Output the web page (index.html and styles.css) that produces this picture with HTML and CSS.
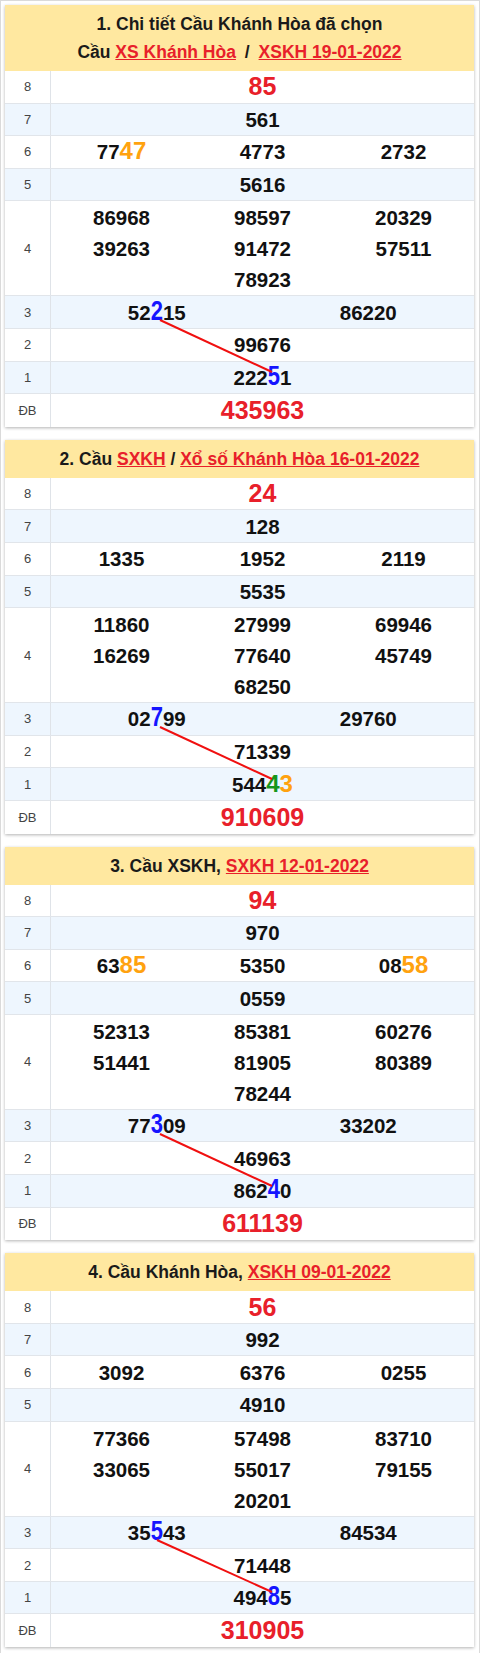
FILE: index.html
```html
<!DOCTYPE html>
<html lang="vi">
<head>
<meta charset="utf-8">
<title>Cầu Khánh Hòa</title>
<link rel="stylesheet" href="styles.css">
</head>
<body>
<div class="page">

  <section class="card">
    <div class="card-head">
      <div>1. Chi tiết Cầu Khánh Hòa đã chọn</div>
      <div>Cầu <a href="#">XS Khánh Hòa</a> <span class="sep">/</span> <a href="#">XSKH 19-01-2022</a></div>
    </div>
    <div class="card-body">
      <div class="row"><div class="lbl">8</div><div class="val"><span class="big">85</span></div></div>
      <div class="row alt"><div class="lbl">7</div><div class="val"><span>561</span></div></div>
      <div class="row"><div class="lbl">6</div><div class="val c3"><span>77<span class="hl o">47</span></span><span>4773</span><span>2732</span></div></div>
      <div class="row alt"><div class="lbl">5</div><div class="val"><span>5616</span></div></div>
      <div class="row tall"><div class="lbl">4</div><div class="val c3"><span>86968</span><span>98597</span><span>20329</span><span>39263</span><span>91472</span><span>57511</span><span class="mid">78923</span></div></div>
      <div class="row alt"><div class="lbl">3</div><div class="val c2"><span>52<span class="hl b">2</span>15</span><span>86220</span></div></div>
      <div class="row"><div class="lbl">2</div><div class="val"><span>99676</span></div></div>
      <div class="row alt"><div class="lbl">1</div><div class="val"><span>222<span class="hl b">5</span>1</span></div></div>
      <div class="row"><div class="lbl">ĐB</div><div class="val"><span class="big">435963</span></div></div>
      <svg class="bridge" viewBox="0 0 469 356" width="469" height="356"><line x1="155" y1="249" x2="267" y2="301"/></svg>
    </div>
  </section>

  <section class="card">
    <div class="card-head">
      <div>2. Cầu <a href="#">SXKH</a> / <a href="#">Xổ số Khánh Hòa 16-01-2022</a></div>
    </div>
    <div class="card-body">
      <div class="row"><div class="lbl">8</div><div class="val"><span class="big">24</span></div></div>
      <div class="row alt"><div class="lbl">7</div><div class="val"><span>128</span></div></div>
      <div class="row"><div class="lbl">6</div><div class="val c3"><span>1335</span><span>1952</span><span>2119</span></div></div>
      <div class="row alt"><div class="lbl">5</div><div class="val"><span>5535</span></div></div>
      <div class="row tall"><div class="lbl">4</div><div class="val c3"><span>11860</span><span>27999</span><span>69946</span><span>16269</span><span>77640</span><span>45749</span><span class="mid">68250</span></div></div>
      <div class="row alt"><div class="lbl">3</div><div class="val c2"><span>02<span class="hl b">7</span>99</span><span>29760</span></div></div>
      <div class="row"><div class="lbl">2</div><div class="val"><span>71339</span></div></div>
      <div class="row alt"><div class="lbl">1</div><div class="val"><span>544<span class="hl g">4</span><span class="hl o">3</span></span></div></div>
      <div class="row"><div class="lbl">ĐB</div><div class="val"><span class="big">910609</span></div></div>
      <svg class="bridge" viewBox="0 0 469 356" width="469" height="356"><line x1="155" y1="249" x2="267" y2="301"/></svg>
    </div>
  </section>

  <section class="card">
    <div class="card-head">
      <div>3. Cầu XSKH, <a href="#">SXKH 12-01-2022</a></div>
    </div>
    <div class="card-body">
      <div class="row"><div class="lbl">8</div><div class="val"><span class="big">94</span></div></div>
      <div class="row alt"><div class="lbl">7</div><div class="val"><span>970</span></div></div>
      <div class="row"><div class="lbl">6</div><div class="val c3"><span>63<span class="hl o">85</span></span><span>5350</span><span>08<span class="hl o">58</span></span></div></div>
      <div class="row alt"><div class="lbl">5</div><div class="val"><span>0559</span></div></div>
      <div class="row tall"><div class="lbl">4</div><div class="val c3"><span>52313</span><span>85381</span><span>60276</span><span>51441</span><span>81905</span><span>80389</span><span class="mid">78244</span></div></div>
      <div class="row alt"><div class="lbl">3</div><div class="val c2"><span>77<span class="hl b">3</span>09</span><span>33202</span></div></div>
      <div class="row"><div class="lbl">2</div><div class="val"><span>46963</span></div></div>
      <div class="row alt"><div class="lbl">1</div><div class="val"><span>862<span class="hl b">4</span>0</span></div></div>
      <div class="row"><div class="lbl">ĐB</div><div class="val"><span class="big">611139</span></div></div>
      <svg class="bridge" viewBox="0 0 469 356" width="469" height="356"><line x1="155" y1="249" x2="267" y2="301"/></svg>
    </div>
  </section>

  <section class="card">
    <div class="card-head">
      <div>4. Cầu Khánh Hòa, <a href="#">XSKH 09-01-2022</a></div>
    </div>
    <div class="card-body">
      <div class="row"><div class="lbl">8</div><div class="val"><span class="big">56</span></div></div>
      <div class="row alt"><div class="lbl">7</div><div class="val"><span>992</span></div></div>
      <div class="row"><div class="lbl">6</div><div class="val c3"><span>3092</span><span>6376</span><span>0255</span></div></div>
      <div class="row alt"><div class="lbl">5</div><div class="val"><span>4910</span></div></div>
      <div class="row tall"><div class="lbl">4</div><div class="val c3"><span>77366</span><span>57498</span><span>83710</span><span>33065</span><span>55017</span><span>79155</span><span class="mid">20201</span></div></div>
      <div class="row alt"><div class="lbl">3</div><div class="val c2"><span>35<span class="hl b">5</span>43</span><span>84534</span></div></div>
      <div class="row"><div class="lbl">2</div><div class="val"><span>71448</span></div></div>
      <div class="row alt"><div class="lbl">1</div><div class="val"><span>494<span class="hl b">8</span>5</span></div></div>
      <div class="row"><div class="lbl">ĐB</div><div class="val"><span class="big">310905</span></div></div>
      <svg class="bridge" viewBox="0 0 469 356" width="469" height="356"><line x1="152" y1="249" x2="267" y2="301"/></svg>
    </div>
  </section>

</div>
</body>
</html>
```

FILE: styles.css
```css
html, body {
  margin: 0;
  padding: 0;
  background: #fff;
}

body {
  font-family: "Liberation Sans", Arial, sans-serif;
  color: #111;
}

.page {
  width: 480px;
  min-height: 1653px;
  box-sizing: border-box;
  border: 1px solid #dadada;
  padding: 4px 5px 4px 4px;
}

.card {
  background: #fff;
  box-shadow: 0 1px 3px rgba(0, 0, 0, 0.3);
  margin-bottom: 13px;
}

.card-head {
  background: #ffe8a0;
  text-align: center;
  font-weight: bold;
  font-size: 17.5px;
  line-height: 28px;
  padding: 5px;
  color: #1a1a1a;
}

.card-head a {
  color: #e8202a;
  text-decoration: underline;
}

.card-head .sep {
  margin: 0 4px;
}

.card-body {
  position: relative;
}

.row {
  display: grid;
  grid-template-columns: 46px 1fr;
  height: 32.6px;
  box-sizing: border-box;
  border-bottom: 1px solid #e1e5ea;
}

.row:last-of-type {
  border-bottom: none;
}

.row.alt {
  background: #eef6fe;
}

.row.tall {
  height: 95px;
}

.lbl {
  display: flex;
  align-items: center;
  justify-content: center;
  border-right: 1px solid #dfe3e8;
  font-size: 13px;
  color: #444;
}

.val {
  display: grid;
  align-items: center;
  justify-items: center;
  font-weight: bold;
  font-size: 20.5px;
  color: #111;
  line-height: 31px;
}

.val.c3 {
  grid-template-columns: repeat(3, 1fr);
}

.val.c2 {
  grid-template-columns: repeat(2, 1fr);
}

.row.tall .val {
  grid-auto-rows: 31px;
  padding-top: 1px;
  align-content: start;
}

.val .mid {
  grid-column: 2;
}

.big {
  font-size: 25px;
  color: #e8202a;
}

.hl {
  font-size: 24px;
  line-height: 1;
}

.hl.b {
  display: inline-block;
  font-size: 22px;
  transform: scaleY(1.27);
  transform-origin: 50% 82%;
}

.hl.o { color: #ffa20f; }
.hl.b { color: #1414ff; }
.hl.g { color: #16961c; }

.bridge {
  position: absolute;
  left: 0;
  top: 0;
  pointer-events: none;
}

.bridge line {
  stroke: #f01010;
  stroke-width: 2;
}
```
